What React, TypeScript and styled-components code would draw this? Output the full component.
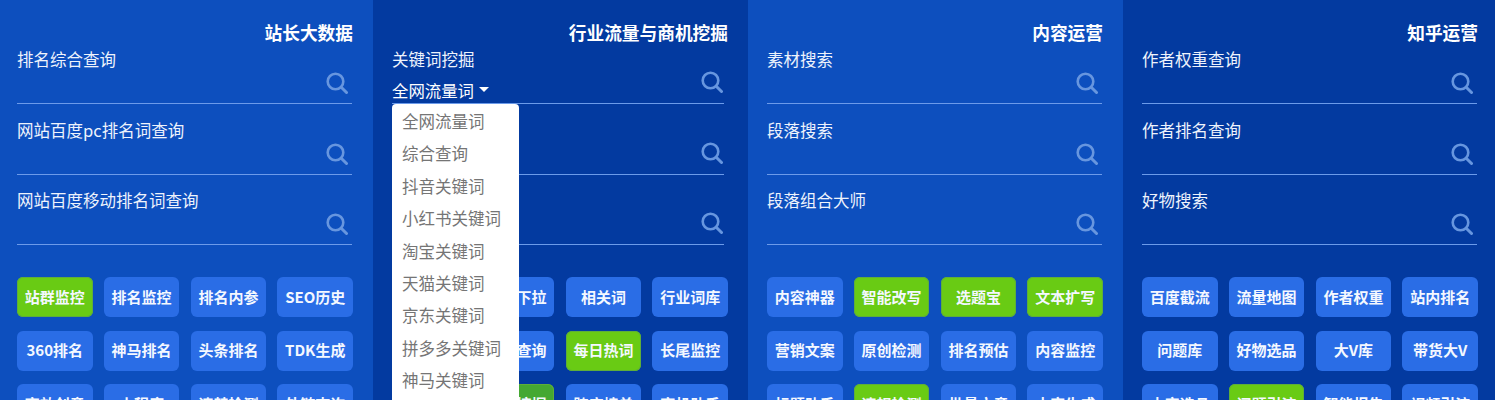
import { createGlobalStyle } from "styled-components";
import styled from "styled-components";

type Tool = { name: string; green?: "bright" | "muted" };
type Column = {
  title: string;
  searches: string[];
  tools: Tool[];
  dark: boolean;
  dropdown?: boolean;
};

const t = (name: string, green?: Tool["green"]): Tool => ({ name, green });

const columns: Column[] = [
  {
    title: "站长大数据",
    dark: false,
    searches: ["排名综合查询", "网站百度pc排名词查询", "网站百度移动排名词查询"],
    tools: [
      t("站群监控", "bright"), t("排名监控"), t("排名内参"), t("SEO历史"),
      t("360排名"), t("神马排名"), t("头条排名"), t("TDK生成"),
      t("高效创意"), t("小程序"), t("违禁检测"), t("外链查询"),
    ],
  },
  {
    title: "行业流量与商机挖掘",
    dark: true,
    dropdown: true,
    searches: ["关键词挖掘", "", ""],
    tools: [
      t("需求图谱"), t("搜索下拉"), t("相关词"), t("行业词库"),
      t("词库对比"), t("流量查询"), t("每日热词", "bright"), t("长尾监控"),
      t("词根提取"), t("商机挖掘", "muted"), t("跨店榜单"), t("商机助手"),
    ],
  },
  {
    title: "内容运营",
    dark: false,
    searches: ["素材搜索", "段落搜索", "段落组合大师"],
    tools: [
      t("内容神器"), t("智能改写", "bright"), t("选题宝", "bright"), t("文本扩写", "bright"),
      t("营销文案"), t("原创检测"), t("排名预估"), t("内容监控"),
      t("标题助手"), t("违规检测", "bright"), t("批量文章"), t("内容生成"),
    ],
  },
  {
    title: "知乎运营",
    dark: true,
    searches: ["作者权重查询", "作者排名查询", "好物搜索"],
    tools: [
      t("百度截流"), t("流量地图"), t("作者权重"), t("站内排名"),
      t("问题库"), t("好物选品"), t("大V库"), t("带货大V"),
      t("内容选品"), t("问题引流", "bright"), t("智能报告"), t("视频引流"),
    ],
  },
];

const menuItems = [
  "全网流量词", "综合查询", "抖音关键词", "小红书关键词", "淘宝关键词",
  "天猫关键词", "京东关键词", "拼多多关键词", "神马关键词",
];

const greens = { bright: "#69cb14", muted: "#45a832" };

const GlobalStyle = createGlobalStyle`
  html, body {
    margin: 0;
    height: 400px;
    overflow: hidden;
    background: #0d4fbe;
  }
  body {
    font-family: "Noto Sans CJK SC", "Open Sans", sans-serif;
  }
`;

const Page = styled.div`
  display: grid;
  grid-template-columns: 373px 375px 375px 372px;
  width: 1495px;
  height: 400px;
  overflow: hidden;
`;

const Panel = styled.section<{ $dark: boolean }>`
  padding: 20px 20px 0 19px;
  background: ${(p) => (p.$dark ? "#033aa0" : "#0d4fbe")};

  &:first-child {
    padding-left: 17px;
  }
  &:last-child {
    padding-right: 17px;
  }
`;

const PanelTitle = styled.h3`
  margin: 0;
  height: 24px;
  font-size: 17.7px;
  line-height: 24px;
  font-weight: 700;
  color: #fff;
  text-align: right;
`;

const SearchRow = styled.div<{ $short?: boolean }>`
  position: relative;
  height: 59px;
  margin-bottom: 10.5px;
  border-bottom: 1px solid #6c9bea;
  margin-right: ${(p) => (p.$short ? "4px" : "1px")};
`;

const SearchLabel = styled.div`
  font-size: 16.5px;
  line-height: 24px;
  padding-top: 3px;
  color: #eef3fc;
`;

const SearchIcon = styled.svg<{ $raised?: boolean }>`
  position: absolute;
  left: 309px;
  top: ${(p) => (p.$raised ? "27px" : "28px")};
  width: 22px;
  height: 22px;
  fill: none;
  stroke: #6796df;
  stroke-width: 2.6;
  stroke-linecap: round;
`;

const Picker = styled.div`
  position: absolute;
  left: 0;
  top: 34px;
  font-size: 16.4px;
  line-height: 24px;
  color: #fff;
  display: flex;
  align-items: center;
  gap: 5px;
`;

const Caret = styled.span`
  display: inline-block;
  width: 0;
  height: 0;
  margin-bottom: 2px;
  border-left: 5px solid transparent;
  border-right: 5px solid transparent;
  border-top: 5px solid #fff;
`;

const Menu = styled.ul`
  position: absolute;
  left: 0;
  top: 60px;
  z-index: 2;
  width: 127px;
  height: 340px;
  margin: 0;
  padding: 1px 0 0;
  list-style: none;
  background: #fff;
  border-radius: 4px;
`;

const MenuItem = styled.li`
  height: 32.4px;
  line-height: 32.4px;
  padding-left: 10px;
  font-size: 16.5px;
  color: #757575;
  white-space: nowrap;
`;

const ToolGrid = styled.div`
  display: grid;
  grid-template-columns: repeat(4, 75.5px);
  justify-content: space-between;
  row-gap: 13.5px;
  margin-top: 32px;
`;

const ToolButton = styled.a<{ $green?: Tool["green"] }>`
  display: flex;
  align-items: center;
  justify-content: center;
  box-sizing: border-box;
  height: 40px;
  padding-bottom: 2px;
  border-radius: 6px;
  font-size: 15px;
  font-weight: 700;
  color: #f4f8ff;
  white-space: nowrap;
  background: ${(p) => (p.$green ? greens[p.$green] : "#2a6de6")};
  ${(p) => p.$green && "box-shadow: inset 0 0 0 1px #5fae3a;"}
`;

const Magnifier = ({ raised }: { raised?: boolean }) => (
  <SearchIcon viewBox="0 0 22 22" $raised={raised}>
    <circle cx="9.5" cy="9.5" r="7.8" />
    <line x1="15.5" y1="15.5" x2="20.5" y2="20.5" strokeWidth="3" />
  </SearchIcon>
);

export default function App() {
  return (
    <Page>
      <GlobalStyle />
      {columns.map((col) => (
        <Panel key={col.title} $dark={col.dark}>
          <PanelTitle>{col.title}</PanelTitle>
          {col.searches.map((label, i) => (
            <SearchRow key={i} $short={col.dropdown}>
              <SearchLabel>{label || "\u00a0"}</SearchLabel>
              {col.dropdown && i === 0 && (
                <>
                  <Picker>
                    全网流量词 <Caret />
                  </Picker>
                  <Menu>
                    {menuItems.map((m) => (
                      <MenuItem key={m}>{m}</MenuItem>
                    ))}
                  </Menu>
                </>
              )}
              <Magnifier raised={col.dropdown} />
            </SearchRow>
          ))}
          <ToolGrid>
            {col.tools.map((tool) => (
              <ToolButton key={tool.name} $green={tool.green}>
                {tool.name}
              </ToolButton>
            ))}
          </ToolGrid>
        </Panel>
      ))}
    </Page>
  );
}
